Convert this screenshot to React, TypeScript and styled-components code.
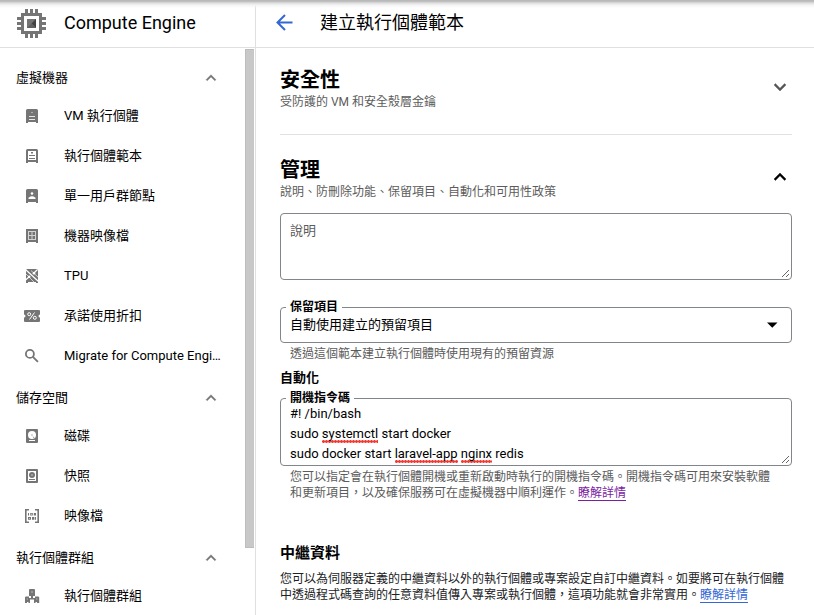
import React from "react";
import styled, { createGlobalStyle } from "styled-components";

const GlobalStyle = createGlobalStyle`
  * { box-sizing: border-box; }
  body {
    margin: 0;
    background: #fff;
    color: #000;
    font-family: Roboto, "Noto Sans CJK TC", sans-serif;
    font-size: 13px;
    overflow: hidden;
  }
  h1, h2, h3, h4, p { margin: 0; }
`;

const Page = styled.div`
  position: relative;
  display: grid;
  grid-template-columns: 256px 1fr;
  height: 615px;
  overflow: hidden;
`;

const TopShadow = styled.div`
  position: absolute;
  inset: 0 0 auto 0;
  height: 8px;
  background: linear-gradient(#b5b5b5 0, #c0c0c0 1.5px, #dedede 3px, #f3f3f3 5px, rgba(255, 255, 255, 0) 8px);
`;

const Sidebar = styled.aside`
  display: flex;
  flex-direction: column;
  border-right: 1px solid #e0e0e0;
  min-height: 0;
`;

const Product = styled.div`
  display: flex;
  align-items: center;
  gap: 18px;
  height: 48px;
  padding: 0 0 2px 16px;
  border-bottom: 1px solid #e0e0e0;
  flex: none;
`;

const ProductName = styled.h1`
  font-size: 18px;
  font-weight: 400;
  line-height: 24px;
  white-space: nowrap;
`;

const NavArea = styled.div`
  display: flex;
  flex: 1;
  min-height: 0;
`;

const Nav = styled.nav`
  flex: 1;
  padding-top: 8px;
  min-width: 0;
  overflow: hidden;
`;

const ScrollThumb = styled.div`
  width: 9px;
  height: 499px;
  margin: 1px 1px 0 0;
  background: #c8c8c8;
  border: 1px solid #bdbdbd;
  border-right: 0;
`;

const GroupHeader = styled.div`
  display: flex;
  align-items: center;
  justify-content: space-between;
  height: 40px;
  padding: 3px 24px 0 16px;
  line-height: 20px;
`;

const NavItem = styled.div`
  display: flex;
  align-items: center;
  gap: 24px;
  height: 40px;
  padding-left: 24px;
  line-height: 20px;
  white-space: nowrap;
  svg { flex: none; }
`;

const Main = styled.main`
  min-width: 0;
`;

const TitleBar = styled.header`
  display: flex;
  align-items: center;
  gap: 27px;
  height: 48px;
  padding: 0 0 2px 20px;
  border-bottom: 1px solid #e0e0e0;
`;

const PageTitle = styled.h2`
  font-size: 18px;
  font-weight: 400;
  line-height: 26px;
`;

const Content = styled.div`
  width: 536px;
  padding-left: 24px;
`;

const Section = styled.section<{ $height: number; $top: number; $divided?: boolean }>`
  display: flex;
  align-items: flex-start;
  justify-content: space-between;
  height: ${(p) => p.$height}px;
  padding-top: ${(p) => p.$top}px;
  border-bottom: ${(p) => (p.$divided ? "1px solid #e0e0e0" : "0")};
`;

const SectionTitle = styled.h3`
  font-size: 20px;
  font-weight: 700;
  line-height: 28px;
`;

const SectionNote = styled.p`
  color: #5c5c5c;
  font-size: 12px;
  line-height: 16px;
`;

const Toggle = styled.div`
  width: 24px;
  height: 24px;
  margin-top: 9px;
`;

const Field = styled.div<{ $height: number; $top: number }>`
  position: relative;
  height: ${(p) => p.$height}px;
  padding: ${(p) => p.$top}px 9px 0;
  border: 1px solid #80868b;
  border-radius: 4px;
  line-height: 20px;
`;

const SelectField = styled(Field)`
  display: flex;
  justify-content: space-between;
  margin-top: 27px;
`;

const FieldLabel = styled.span`
  position: absolute;
  left: 5px;
  top: -9px;
  padding: 0 4px;
  background: #fff;
  font-size: 12px;
  font-weight: 700;
  line-height: 16px;
`;

const Placeholder = styled.span`
  color: #5c5c5c;
`;

const Grip = styled.svg`
  position: absolute;
  right: 1px;
  bottom: 1px;
`;

const Hint = styled.p<{ $top: number }>`
  padding: ${(p) => p.$top}px 0 0 10px;
  color: #5c5c5c;
  font-size: 12px;
  line-height: 16px;
  white-space: nowrap;
`;

const SubTitle = styled.h4`
  height: 36px;
  padding-top: 6px;
  font-size: 13px;
  font-weight: 700;
  line-height: 20px;
`;

const MetaTitle = styled.h3`
  margin-top: 41px;
  font-size: 15px;
  font-weight: 700;
  line-height: 22px;
`;

const MetaText = styled.p`
  margin-top: 7px;
  color: #202124;
  font-size: 12px;
  line-height: 16px;
  white-space: nowrap;
`;

const Link = styled.a<{ $visited?: boolean }>`
  display: inline-block;
  height: 16px;
  color: ${(p) => (p.$visited ? "#7b1fa2" : "#3367d6")};
  border-bottom: 1px solid currentColor;
`;

const Misspelled = styled.span`
  padding-bottom: 2px;
  background: radial-gradient(circle at 1.5px 1.5px, #f23b34 1px, rgba(242, 59, 52, 0.2) 1.7px) 0 100% / 3px 3px repeat-x;
`;

const CodeLine = styled.div`
  white-space: pre;
`;

const G = "#757575";

const icons: Record<string, React.ReactNode> = {
  vm: (
    <>
      <path fill={G} d="M3.500 1h9A1.500 1.500 0 0 1 14 2.500V15h-2v-1H4v1H2V2.500A1.500 1.500 0 0 1 3.500 1z" />
      <path fill="#e8e8e8" d="M7.500 4h1v1h-1zM5 8h6v1H5zM5 11h6v1H5z" />
    </>
  ),
  template: (
    <>
      <path fill={G} d="M3.500 1h9A1.500 1.500 0 0 1 14 2.500V15h-2v-1H4v1H2V2.500A1.500 1.500 0 0 1 3.500 1z" />
      <path fill="#fff" d="M4 3h8v9H4z" />
      <path fill={G} d="M7 4h2v1.500H7zM5 7h6v1H5zM5 10h6v1H5z" />
    </>
  ),
  node: (
    <>
      <path fill={G} d="M3.500 1h9A1.500 1.500 0 0 1 14 2.500V15h-2v-1H4v1H2V2.500A1.500 1.500 0 0 1 3.500 1z" />
      <circle cx="8" cy="5.500" r="1.300" fill="#fff" />
      <path fill="#fff" d="M4.500 11V9.700Q8 7 11.500 9.700V11z" />
    </>
  ),
  machine: (
    <>
      <path fill={G} d="M2 1h12v14h-2v-1H4v1H2z" />
      <path fill="#d4d4d4" fillRule="evenodd" d="M4 3h8v9H4zM5 4v7h6V4z" />
      <path fill="#d4d4d4" d="M5 7h6v1H5zM7.500 4h1v3h-1zM7.500 8h1v3h-1z" />
    </>
  ),
  tpu: (
    <>
      <path fill={G} d="M3 1h10l1 1v13h-2v-1H4v1H2V2z" />
      <path stroke="#fff" strokeWidth="1.200" fill="none" d="M2 2l12.500 11.500M1.500 12l4-3.500M9.500 5.500l4-4" />
      <path stroke="#fff" strokeWidth="1" fill="none" d="M7 2.500l7 6.500M2 6l8 8" opacity="0.650" />
      <circle cx="5.200" cy="8.800" r="1.300" fill="#fff" />
      <circle cx="10" cy="5.200" r="1.300" fill="#fff" />
    </>
  ),
  discount: (
    <>
      <path fill={G} d="M1 2h14a1 1 0 0 1 1 1v3.500a1.500 1.500 0 0 0 0 3V13a1 1 0 0 1-1 1H1a1 1 0 0 1-1-1V9.500a1.500 1.500 0 0 0 0-3V3a1 1 0 0 1 1-1z" />
      <g fill="none" stroke="#fff" strokeWidth="1">
        <circle cx="5.200" cy="6.200" r="1.500" />
        <circle cx="10.800" cy="9.800" r="1.500" />
        <path d="M10.500 4.500l-5 7" />
      </g>
    </>
  ),
  search: (
    <g fill="none" stroke={G} strokeWidth="1.800">
      <circle cx="5.900" cy="5.900" r="4" />
      <path d="M8.900 8.900l5 5" />
    </g>
  ),
  disk: (
    <>
      <rect x="2" y="1" width="12" height="14" rx="1" fill={G} />
      <circle cx="8" cy="7" r="4" fill="#fff" />
      <path fill="#fff" d="M5 12h6v1H5z" />
      <circle cx="8" cy="7" r="0.800" fill="#aaa" />
      <path fill="#999" d="M8.500 8l2 1.500-.8 1z" />
    </>
  ),
  snapshot: (
    <>
      <rect x="2" y="1" width="12" height="14" rx="1" fill={G} />
      <path fill="#fff" d="M4 3h8v10H4z" />
      <circle cx="8" cy="7" r="3" fill={G} />
      <circle cx="8" cy="7" r="1" fill="#aaa" />
      <path fill={G} d="M5 11h6v1H5z" />
    </>
  ),
  image: (
    <>
      <path fill="none" stroke={G} strokeWidth="1.600" d="M5 1.800H1.800v12.400H5M11 1.800h3.200v12.400H11" />
      <path fill={G} d="M4 5h1v2.500H4zM6.200 5h2.600v2.500H6.200zM9.800 5H12v2.500H9.800zM4 9h3v2.700H4zM8 9h2.400v2.700H8zM11 9h1v2.700h-1z" />
      <path fill="#ddd" d="M7 5.800h1v.9H7zM5 9.900h1v.9H5z" />
    </>
  ),
  group: (
    <>
      <path fill={G} d="M6 1h4a1 1 0 0 1 1 1v6H9v2h2V8.500h3.500l.7.700V15H13v-1h-1.500v1H10v-3.500H6V15H4.500v-1H3v1H1V9.200l.7-.7H5V10h2V8H5V2a1 1 0 0 1 1-1z" />
      <path fill="#fff" d="M7.500 3.500h1v1h-1zM7.500 12h1v3h-1z" />
      <path fill="#ccc" d="M2.700 10.500h1v1h-1zM12.300 10.500h1v1h-1z" />
    </>
  ),
};

const NavIcon = ({ name }: { name: string }) => (
  <svg width="16" height="16" viewBox="0 0 16 16">{icons[name]}</svg>
);

const groups = [
  {
    title: "虛擬機器",
    items: [
      ["vm", "VM 執行個體"],
      ["template", "執行個體範本"],
      ["node", "單一用戶群節點"],
      ["machine", "機器映像檔"],
      ["tpu", "TPU"],
      ["discount", "承諾使用折扣"],
      ["search", "Migrate for Compute Engi…"],
    ],
  },
  {
    title: "儲存空間",
    items: [
      ["disk", "磁碟"],
      ["snapshot", "快照"],
      ["image", "映像檔"],
    ],
  },
  { title: "執行個體群組", items: [["group", "執行個體群組"]] },
];

const ComputeLogo = () => (
  <svg width="30" height="30" viewBox="0 0 30 30">
    <path
      fill="#757575"
      d="M9 1h3v4H9zM14 1h3v4h-3zM19 1h3v4h-3zM9 26h3v4H9zM14 26h3v4h-3zM19 26h3v4h-3zM1 9h4v3H1zM1 14h4v3H1zM1 19h4v3H1zM26 9h4v3h-4zM26 14h4v3h-4zM26 19h4v3h-4z"
    />
    <path fill="#757575" fillRule="evenodd" d="M5 5h21v21H5zM8 8v15h15V8z" />
    <path fill="#757575" d="M11 11h9v9h-9z" />
    <path fill="#424242" d="M20 11v9l-4.500-4.500z" />
    <path fill="#616161" d="M11 20h9l-4.500-4.500z" />
  </svg>
);

const Chevron = ({ down, size = 24, color }: { down?: boolean; size?: number; color: string }) => (
  <svg width={size} height={size} viewBox="0 0 24 24">
    <path
      fill={color}
      stroke={color}
      strokeWidth="0.400"
      d={down ? "M7.410 8.590L12 13.170l4.590-4.580L18 10l-6 6-6-6z" : "M12 8l-6 6 1.410 1.410L12 10.830l4.590 4.580L18 14z"}
    />
  </svg>
);

const ResizeGrip = () => (
  <Grip width="9" height="9" viewBox="0 0 9 9">
    <path d="M1 8L8 1M5 8l3-3" stroke="#555" strokeWidth="0.900" />
  </Grip>
);

export default function App() {
  return (
    <>
      <GlobalStyle />
      <Page>
        <Sidebar>
          <Product>
            <ComputeLogo />
            <ProductName>Compute Engine</ProductName>
          </Product>
          <NavArea>
            <Nav>
              {groups.map((group) => (
                <React.Fragment key={group.title}>
                  <GroupHeader>
                    {group.title}
                    <Chevron size={20} color="#757575" />
                  </GroupHeader>
                  {group.items.map(([icon, label]) => (
                    <NavItem key={label}>
                      <NavIcon name={icon} />
                      {label}
                    </NavItem>
                  ))}
                </React.Fragment>
              ))}
            </Nav>
            <ScrollThumb />
          </NavArea>
        </Sidebar>
        <Main>
          <TitleBar>
            <svg width="17" height="17" viewBox="0 0 17 17">
              <path d="M16.500 8.500H2M9 1L1.500 8.500 9 16" fill="none" stroke="#3367d6" strokeWidth="2" />
            </svg>
            <PageTitle>建立執行個體範本</PageTitle>
          </TitleBar>
          <Content>
            <Section $height={87} $top={18} $divided>
              <div>
                <SectionTitle>安全性</SectionTitle>
                <SectionNote>受防護的 VM 和安全殼層金鑰</SectionNote>
              </div>
              <Toggle><Chevron down color="#555" /></Toggle>
            </Section>
            <Section $height={78} $top={21}>
              <div>
                <SectionTitle>管理</SectionTitle>
                <SectionNote>說明、防刪除功能、保留項目、自動化和可用性政策</SectionNote>
              </div>
              <Toggle><Chevron color="#000" /></Toggle>
            </Section>
            <Field $height={67} $top={7}>
              <Placeholder>說明</Placeholder>
              <ResizeGrip />
            </Field>
            <SelectField $height={36} $top={7}>
              <FieldLabel>保留項目</FieldLabel>
              自動使用建立的預留項目
              <svg width="20" height="20" viewBox="0 0 20 20">
                <path d="M5 7.500h10.500L10.250 12.800z" fill="#000" />
              </svg>
            </SelectField>
            <Hint $top={3}>透過這個範本建立執行個體時使用現有的預留資源</Hint>
            <SubTitle>自動化</SubTitle>
            <Field $height={68} $top={5}>
              <FieldLabel>開機指令碼</FieldLabel>
              <CodeLine>#! /bin/bash</CodeLine>
              <CodeLine>sudo <Misspelled>systemctl</Misspelled> start docker</CodeLine>
              <CodeLine>sudo docker start <Misspelled>laravel-app</Misspelled> <Misspelled>nginx</Misspelled> redis</CodeLine>
              <ResizeGrip />
            </Field>
            <Hint $top={3}>
              您可以指定會在執行個體開機或重新啟動時執行的開機指令碼。開機指令碼可用來安裝軟體
              <br />
              和更新項目，以及確保服務可在虛擬機器中順利運作。<Link $visited>瞭解詳情</Link>
            </Hint>
            <MetaTitle>中繼資料</MetaTitle>
            <MetaText>
              您可以為伺服器定義的中繼資料以外的執行個體或專案設定自訂中繼資料。如要將可在執行個體
              <br />
              中透過程式碼查詢的任意資料值傳入專案或執行個體，這項功能就會非常實用。<Link>瞭解詳情</Link>
            </MetaText>
          </Content>
        </Main>
        <TopShadow />
      </Page>
    </>
  );
}
